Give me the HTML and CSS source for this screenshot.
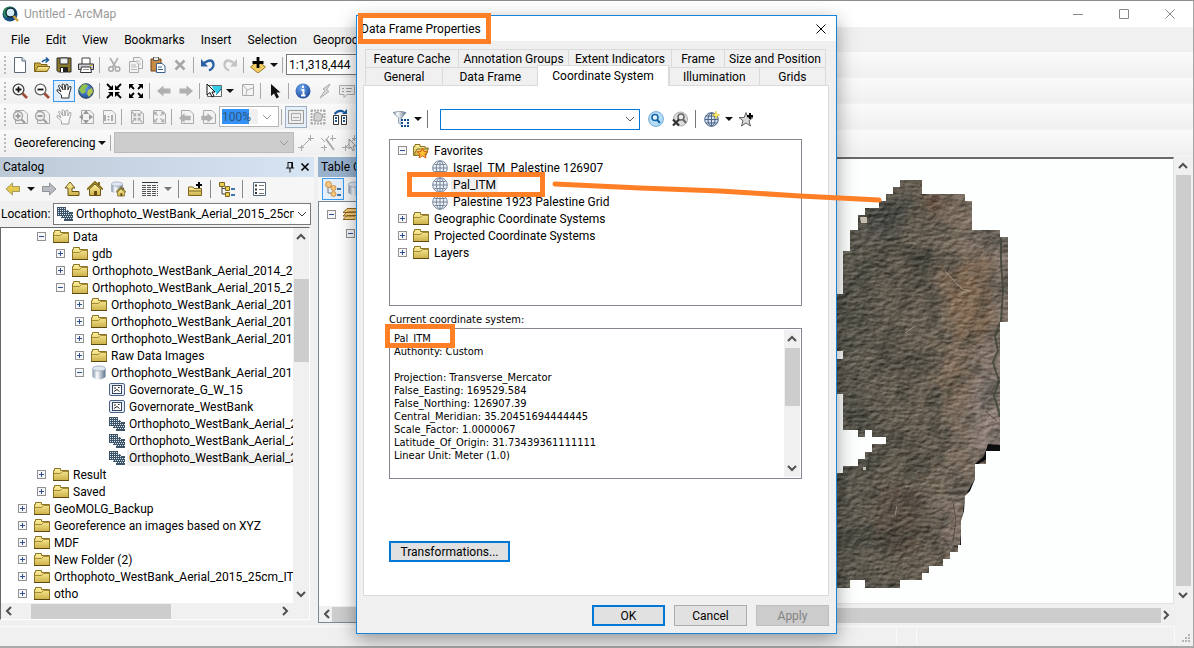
FILE: index.html
```
<!DOCTYPE html>
<html lang="en">
<head>
  <meta charset="UTF-8">
  <meta name="viewport" content="width=device-width, initial-scale=1.0">
  <title>Untitled - ArcMap</title>
  <link rel="stylesheet" href="styles.css">
</head>
<body>
  <!-- icon set -->
  <svg class="sprite" aria-hidden="true">
    <defs>
      <linearGradient id="gold" x1="0" y1="0" x2="0" y2="1"><stop offset="0" stop-color="#fff3a0"/><stop offset="1" stop-color="#cdb04a"/></linearGradient>
      <linearGradient id="steel"><stop offset="0" stop-color="#7f93aa"/><stop offset=".35" stop-color="#fff"/><stop offset="1" stop-color="#5c728c"/></linearGradient>
      <radialGradient id="blue" cx=".4" cy=".3" r=".8"><stop offset="0" stop-color="#6ea8ee"/><stop offset="1" stop-color="#123f92"/></radialGradient>
    </defs>
    <symbol id="folder" viewBox="0 0 16 16"><path d="M.5 13.500V3.500H1.500V1.500H7.500V3.500H15.500V13.500Z" fill="url(#gold)" stroke="#8c7426"/><path d="M1 6.500H7.500L9.500 4.500H15" fill="none" stroke="#a58b36"/><path d="M0 13.500H16" stroke="#5c4a12"/></symbol>
    <symbol id="favs" viewBox="0 0 16 16"><path d="M.5 12.500V3.500H2V1.500H7V3.500H12V5H15.500L13 12.500Z" fill="url(#gold)" stroke="#8c7426"/><path d="M1 12L4 6H15" fill="none" stroke="#8c7426"/><path d="M9.500 5L11 8.500 15 8.800 12 11 13 15 9.500 12.800 6 15 7 11 4 8.800 8 8.500Z" fill="#ffc332" stroke="#d55c10"/></symbol>
    <symbol id="gdb" viewBox="0 0 16 16"><path d="M1.500 3.500V12Q8 17 14.500 12V3.500Z" fill="url(#steel)"/><ellipse cx="8" cy="3.500" rx="6.500" ry="2.500" fill="#dfe7f0" stroke="#a8b5c4"/></symbol>
    <symbol id="feature" viewBox="0 0 16 16"><rect x=".5" y="1.500" width="15" height="12" rx="1.500" fill="#e7eef8" stroke="#4a6286"/><rect x="3.500" y="3.500" width="9" height="8" fill="#fff" stroke="#34445c"/><path d="M5 6H7M9 5.500H10.500M5 9.500L8 7.500 10.500 9.500" stroke="#222" fill="none"/></symbol>
    <symbol id="raster" viewBox="0 0 16 16"><path d="M0 1H9V4H12V6H16V15H7V12H4V10H0Z" fill="#3d5468"/><path d="M1 2.500H9M1 4.500H12M1 6.500H12M1 8.500H16M4 10.500H16M7 12.500H16" stroke="#dce8f2" stroke-dasharray="1 1"/></symbol>
    <symbol id="globe" viewBox="0 0 16 16"><circle cx="8" cy="8" r="7.300" fill="#eef2f6" stroke="#76869b"/><path d="M8 1V15M1 8H15M2.500 4.500H13.500M2.500 11.500H13.500" stroke="#76869b" fill="none"/><ellipse cx="8" cy="8" rx="3.700" ry="7" fill="none" stroke="#76869b"/></symbol>
    <symbol id="globe-new" viewBox="0 0 16 16"><circle cx="7.500" cy="8.500" r="6.800" fill="#d4e0ef" stroke="#4a6488"/><path d="M7.500 2V15M1 8.500H14M2 5H13M2 12H13" stroke="#4a6488" fill="none"/><ellipse cx="7.500" cy="8.500" rx="3.500" ry="6.500" fill="none" stroke="#4a6488"/><path d="M12 0L13 3 16 4 13 5 12 8 11 5 8 4 11 3Z" fill="#fff36b" stroke="#d8b92c" stroke-width=".5"/></symbol>
    <symbol id="star-add" viewBox="0 0 16 16"><path d="M7 1.500L8.800 6.500H14L10 9.800 11.500 15 7 12 2.500 15 4 9.800 0 6.500H5.200Z" fill="#d9d9d9" stroke="#606060"/><path d="M11 2V8M8 5H14" stroke="#000" stroke-width="2"/></symbol>
    <symbol id="filter" viewBox="0 0 16 16"><path d="M0 1.500Q6.500-1 13 1.500L8.500 7V14L5.500 12V7Z" fill="url(#steel)" stroke="#6d7e90" stroke-width=".7"/><path d="M8 8H16V16H8Z" fill="#fff"/><path d="M8 9H16M8 15H16M9 11V14M15 11V14" stroke="#0a4f96" stroke-width="2" stroke-dasharray="2 1"/></symbol>
    <symbol id="find" viewBox="0 0 16 16"><circle cx="8" cy="8" r="7.400" fill="#b6ddf7" stroke="#6faad6"/><circle cx="7" cy="6.500" r="3" fill="#e8f6ff" stroke="#1667a8" stroke-width="1.600"/><path d="M9.200 9L12 12" stroke="#1667a8" stroke-width="2.200"/></symbol>
    <symbol id="find-clear" viewBox="0 0 16 16"><circle cx="8.500" cy="8" r="7" fill="#ddd" stroke="#aaa"/><circle cx="9" cy="6" r="3" fill="#eee" stroke="#666" stroke-width="1.500"/><path d="M11 8.500L14 12" stroke="#666" stroke-width="2"/><path d="M1 8.500L7 14.500M7 8.500L1 14.500" stroke="#333" stroke-width="2.200"/></symbol>
    <symbol id="app" viewBox="0 0 18 18"><circle cx="8" cy="9" r="7.500" fill="#17507f"/><path d="M2 4Q7 0 12 3L9 8 4 13Q0 10 2 4Z" fill="#2e8b57"/><circle cx="8.500" cy="7.500" r="4.500" fill="#d3edf8" stroke="#123" stroke-width="1.300"/><path d="M11.500 11L16 16" stroke="#caa13c" stroke-width="2.500"/></symbol>
    <symbol id="page" viewBox="0 0 16 16"><path d="M2.500.5H10L13.500 4V15.500H2.500Z" fill="#fff" stroke="#5a6a7a"/><path d="M10 .5V4H13.500" fill="#dbe4ee" stroke="#5a6a7a"/></symbol>
    <symbol id="open" viewBox="0 0 16 16"><path d="M.5 14.500V6H6L7 7.500H13V14.500Z" fill="#c9a93f" stroke="#7d651b"/><path d="M1 14.500L4 9.500H16L13 14.500Z" fill="url(#gold)" stroke="#7d651b"/><path d="M8 5Q10 2 14 3M12 .5L14.500 3 11.500 5.500" fill="none" stroke="#17599b" stroke-width="1.500"/></symbol>
    <symbol id="save" viewBox="0 0 16 16"><path d="M1 1H15V15H2.500L1 13.500Z" fill="#8c7a2c" stroke="#2b2b2b"/><path d="M4 1H12V7H4Z" fill="#eee" stroke="#333"/><path d="M4 10H12V15H4Z" fill="#222"/><path d="M6 11V15" stroke="#fff" stroke-width="2"/></symbol>
    <symbol id="print" viewBox="0 0 16 16"><path d="M4 7V1H12V7" fill="#fff" stroke="#444"/><path d="M.5 7H15.500V12.500H.5Z" fill="#c9ccd0" stroke="#333"/><path d="M3.500 10H12.500L13.500 15.500H2.500Z" fill="#fff" stroke="#333"/><path d="M5 12.500H11" stroke="#999"/><path d="M12 8.500H14" stroke="#e0b000"/></symbol>
    <symbol id="cut" viewBox="0 0 16 16"><path d="M4 1L9.500 10M12 1L6.500 10" stroke="#aaa" stroke-width="1.500"/><circle cx="5" cy="12" r="2.300" fill="none" stroke="#aaa" stroke-width="1.500"/><circle cx="11.500" cy="12" r="2.300" fill="none" stroke="#aaa" stroke-width="1.500"/></symbol>
    <symbol id="copy" viewBox="0 0 16 16"><path d="M5.500.5H12L14.500 3V11.500H5.500Z" fill="#f3f3f3" stroke="#aaa"/><path d="M1.500 4.500H8L10.500 7V15.500H1.500Z" fill="#f3f3f3" stroke="#aaa"/><path d="M3 8H8M3 10H9M3 12.500H9M8 4H12M11 7H13" stroke="#bbb"/></symbol>
    <symbol id="paste" viewBox="0 0 16 16"><path d="M1 2H11V14H1Z" fill="#c98a45" stroke="#6e4317"/><path d="M3.500 0H8.500V3.500H3.500Z" fill="#eee" stroke="#555"/><path d="M6.500 6.500H12L15 9V15.500H6.500Z" fill="#fff" stroke="#38618e"/><path d="M8 10H12M8 12.500H13" stroke="#38618e"/></symbol>
    <symbol id="delete" viewBox="0 0 16 16"><path d="M3.500 3.500L12.500 12.500M12.500 3.500L3.500 12.500" stroke="#a7a7a7" stroke-width="2.600"/></symbol>
    <symbol id="undo" viewBox="0 0 16 16"><path d="M3 7Q12 0 13.500 7 14 11 9 13.500" fill="none" stroke="#2b62a5" stroke-width="2.400"/><path d="M1 2V9.500H8Z" fill="#2b62a5"/></symbol>
    <symbol id="redo" viewBox="0 0 16 16"><path d="M13 7Q4 0 2.500 7 2 11 7 13.500" fill="none" stroke="#c4c4c4" stroke-width="2.400"/><path d="M15 2V9.500H8Z" fill="#c4c4c4"/></symbol>
    <symbol id="add-data" viewBox="0 0 16 16"><path d="M8 4L15.500 10 8 16 .5 10Z" fill="#f2cc62" stroke="#9c772a"/><path d="M8 0V11M2.500 5.500H13.500" stroke="#000" stroke-width="2.800"/></symbol>
    <symbol id="zoom-in" viewBox="0 0 16 16"><circle cx="6.500" cy="6.500" r="5.400" fill="#fff" stroke="#444" stroke-width="1.300"/><path d="M10.500 10.500L15 15" stroke="#a04b38" stroke-width="2.600"/><path d="M6.500 3.500V9.500M3.500 6.500H9.500" stroke="#111" stroke-width="1.800"/></symbol>
    <symbol id="zoom-out" viewBox="0 0 16 16"><circle cx="6.500" cy="6.500" r="5.400" fill="#fff" stroke="#666" stroke-width="1.300"/><path d="M10.500 10.500L15 15" stroke="#a04b38" stroke-width="2.600"/><path d="M3.500 6.500H9.500" stroke="#111" stroke-width="1.800"/></symbol>
    <symbol id="hand" viewBox="0 0 16 16"><path d="M5.500 15V12L1 8Q0 6 3 7L5 9 2.500 3Q3 1 4.500 3L7 7 6 1.500Q7.500 0 8.500 2L9 7 10 1.500Q11.500 0 12 2.500L11.800 7 13.500 3.500Q15.500 3 15 5L13 12V15Z" fill="#fff" stroke="#333"/></symbol>
    <symbol id="earth" viewBox="0 0 16 16"><circle cx="8" cy="8" r="7.300" fill="url(#blue)" stroke="#345"/><path d="M4 2Q9 0 10 3L7 6 8 9 4 11 1 7Z" fill="#8fc050"/><path d="M10 7L14 5 15 9 11 14 9 11Z" fill="#b4c64e"/></symbol>
    <symbol id="arrows-in" viewBox="0 0 16 16"><path d="M1 1L6 6M15 1L10 6M1 15L6 10M15 15L10 10" stroke="currentColor" stroke-width="1.800"/><path d="M7 2V7H2ZM9 2V7H14ZM7 14V9H2ZM9 14V9H14Z" fill="currentColor"/></symbol>
    <symbol id="arrows-out" viewBox="0 0 16 16"><path d="M2 2L6 6M14 2L10 6M2 14L6 10M14 14L10 10" stroke="currentColor" stroke-width="1.800"/><path d="M1 1H6L1 6ZM15 1H10L15 6ZM1 15H6L1 10ZM15 15H10L15 10Z" fill="currentColor"/></symbol>
    <symbol id="left" viewBox="0 0 16 16"><path d="M1 8L7.500 2V5.500H14.500V10.500H7.500V14Z" fill="currentColor" stroke="#776a3a" stroke-opacity=".6"/></symbol>
    <symbol id="right" viewBox="0 0 16 16"><path d="M15 8L8.500 2V5.500H1.500V10.500H8.500V14Z" fill="currentColor" stroke="#666" stroke-opacity=".6"/></symbol>
    <symbol id="left-off" viewBox="0 0 16 16"><path d="M1 8L7.500 2.500V5.500H14.500V10.500H7.500V13.500Z" fill="#b0b0b0"/></symbol>
    <symbol id="right-off" viewBox="0 0 16 16"><path d="M15 8L8.500 2.500V5.500H1.500V10.500H8.500V13.500Z" fill="#b0b0b0"/></symbol>
    <symbol id="select-feat" viewBox="0 0 16 16"><path d="M1.500 2.500H15.500V13.500H1.500Z" fill="#fff" stroke="#666"/><path d="M6 3H15V7L11 11 7 6Z" fill="#35cdea"/><path d="M10 12L15 6" stroke="#176d96"/><path d="M1 1V12L4 9.500 6 14 8 13 6 9H9Z" fill="#fff" stroke="#111"/></symbol>
    <symbol id="clear-sel" viewBox="0 0 16 16"><path d="M3.500 1.500H14.500V12.500H3.500Z" fill="#f4f4f4" stroke="#aaa"/><path d="M4 2L8 7 14 5M8 7L7 12" fill="none" stroke="#b5b5b5"/></symbol>
    <symbol id="pointer" viewBox="0 0 16 16"><path d="M4 1V13L7 10.500 9.500 15.500 12 14 9.500 9.500H13.500Z" fill="#111"/></symbol>
    <symbol id="info" viewBox="0 0 16 16"><circle cx="8" cy="8" r="7.500" fill="url(#blue)"/><path d="M8 2.500V5M6.500 7H8.500V12.500M6 12.500H10.500" stroke="#fff" stroke-width="1.900" fill="none"/></symbol>
    <symbol id="bolt" viewBox="0 0 16 16"><path d="M13 1L6 6 8 7.500 3 15 12 8.500 9.500 7Z" fill="#ddd" stroke="#aaa"/></symbol>
    <symbol id="popup" viewBox="0 0 16 16"><path d="M.5 2.500H15.500V11.500H8L5 14.500V11.500H.5Z" fill="#eee" stroke="#aaa"/><path d="M3 5.500H5M7 5.500H13M3 8.500H5M7 8.500H12" stroke="#999"/></symbol>
    <symbol id="sheet" viewBox="0 0 16 16"><path d="M3.500 1.500H12L15.500 5V14.500H3.500Z" fill="#f2f2f2" stroke="#aaa"/></symbol>
    <symbol id="lens" viewBox="0 0 16 16"><circle cx="6" cy="7" r="4.500" fill="#eee" stroke="#a2a2a2" stroke-width="1.300"/><path d="M9.500 10.500L13 14M3.500 7H8.500" stroke="#9c9c9c" stroke-width="2"/></symbol>
    <symbol id="layout" viewBox="0 0 16 16"><path d="M.5 1.500H15.500V14.500H.5Z" fill="#eee" stroke="#999"/><path d="M3.500 4.500H12.500V11.500H3.500ZM5 8.500H11" fill="none" stroke="#aaa"/></symbol>
    <symbol id="swap" viewBox="0 0 16 16"><path d="M1.500 6.500H6.500V15.500H1.500ZM9.500 6.500H14.500V15.500H9.500Z" fill="#fff" stroke="#333"/><path d="M2.500 5Q7 0 12 3M3 9H5M3 12H5M11 9H13M11 12H13" fill="none" stroke="#17599b" stroke-width="2"/><path d="M10 5H15V0Z" fill="#17599b"/></symbol>
    <symbol id="link" viewBox="0 0 16 16"><path d="M3 13L13 3M0 12.500H6M3.500 10V16M10 3.500H16M12.500 0V6" stroke="#aaa"/></symbol>
    <symbol id="wand" viewBox="0 0 16 16"><path d="M6 4L14 15" stroke="#aaa" stroke-width="2"/><path d="M1 3L5 7M9 1L7 4M1 12.500H7M4.500 10V16M10 3.500H16M12.500 0V6" stroke="#aaa"/></symbol>
    <symbol id="up-level" viewBox="0 0 16 16"><path d="M6 1L11 7H8V10.500H15V14.500H4V7H1Z" fill="url(#gold)" stroke="#6b5712"/></symbol>
    <symbol id="home" viewBox="0 0 16 16"><path d="M2.500 8V14.500H13.500V8L8 3Z" fill="url(#gold)" stroke="#6b5712"/><path d="M0 8.500L8 1 16 8.500" fill="none" stroke="#8b7015" stroke-width="2"/><path d="M7 10H10V14.500H7Z" fill="#6b4b12"/><path d="M12 1V4" stroke="#7c632a" stroke-width="2"/></symbol>
    <symbol id="grid" viewBox="0 0 16 16"><path d="M0 1.500H16" stroke="#333"/><path d="M0 4.500H16M0 6.500H16M0 8.500H16M0 10.500H16M0 12.500H16M0 14.500H16" stroke="#555" stroke-dasharray="4 1"/></symbol>
    <symbol id="connect" viewBox="0 0 16 16"><path d="M1.500 14.500V6H6L7 7.500H14.500V14.500Z" fill="url(#gold)" stroke="#7d651b"/><path d="M1 10H15" stroke="#7d651b"/><path d="M12 1V7M9 4H15" stroke="#000" stroke-width="2"/></symbol>
    <symbol id="tree" viewBox="0 0 16 16"><path d="M3 5V13H7M3 7.500H7" fill="none" stroke="#444"/><path d="M.5 1.500H5.500V5.500H.5ZM6.500 5.500H10.500V9.500H6.500ZM6.500 11.500H10.500V15.500H6.500Z" fill="#e9ce56" stroke="#7d651b"/><path d="M12 8H16M12 14H16" stroke="#3f77ac" stroke-width="2"/></symbol>
    <symbol id="options" viewBox="0 0 16 16"><path d="M2.500 1.500H14.500V14.500H2.500Z" fill="#fff" stroke="#56697f"/><path d="M4 4.500H6M4 8.500H6M4 12H6" stroke="#333" stroke-width="2"/><path d="M8 4.500H13M8 8.500H13M8 12.500H13" stroke="#777"/></symbol>
    <symbol id="toc-tree" viewBox="0 0 16 16"><path d="M3 4V12H8M4 6H8" fill="none" stroke="#777"/><circle cx="3.500" cy="3.500" r="3" fill="#f4c883" stroke="#d19446"/><circle cx="8.500" cy="7" r="2.500" fill="#f4c883" stroke="#d19446"/><circle cx="8.500" cy="13" r="2.500" fill="#f4c883" stroke="#d19446"/><path d="M12 8H16M12 14H16" stroke="#3f77ac" stroke-width="2"/></symbol>
    <symbol id="layers" viewBox="0 0 16 16"><path d="M0 12.500L4 8.500H16L12 12.500ZM0 9L4 5H16L12 9ZM0 5.500L4 1.500H16L12 5.500Z" fill="#f0cd7e" stroke="#94641d"/></symbol>
    <symbol id="pin" viewBox="0 0 12 12"><path d="M4 1.500H8.500V7M4 1V7M2 7H10M6 7V11.500" fill="none" stroke="#111"/><path d="M8 1V7" stroke="#111" stroke-width="1.600"/></symbol>
    <symbol id="cross" viewBox="0 0 12 12"><path d="M1.500 1.500L10.500 10.500M10.500 1.500L1.500 10.500" stroke="currentColor" fill="none"/></symbol>
    <symbol id="cross-sm" viewBox="0 0 12 12"><path d="M2.500 2.500L9.500 9.500M9.500 2.500L2.500 9.500" stroke="#000" stroke-width="1.600"/></symbol>
    <symbol id="chev" viewBox="0 0 10 10"><path d="M1 3L5 7 9 3" fill="none" stroke="currentColor"/></symbol>
    <symbol id="sb" viewBox="0 0 10 10"><path d="M1 7L5 3 9 7" fill="none" stroke="#505050" stroke-width="2"/></symbol>
  </svg>

  <div class="app">
    <header class="titlebar">
      <svg class="app-icon"><use href="#app"/></svg>
      <span class="app-title">Untitled - ArcMap</span>
      <div class="win-controls">
        <button aria-label="Minimize"><svg viewBox="0 0 12 12"><path d="M1 6.500H11" stroke="#888"/></svg></button>
        <button aria-label="Maximize"><svg viewBox="0 0 12 12"><path d="M1.500 1.500H10.500V10.500H1.500Z" fill="none" stroke="#888"/></svg></button>
        <button aria-label="Close"><svg><use href="#cross"/></svg></button>
      </div>
    </header>

    <nav class="menubar">
      <button>File</button><button>Edit</button><button>View</button><button>Bookmarks</button><button>Insert</button><button>Selection</button><button>Geoprocessing</button>
    </nav>

    <div class="toolbars">
      <div class="toolbar">
        <i class="grip"></i>
        <button aria-label="New"><svg><use href="#page"/></svg></button>
        <button aria-label="Open"><svg><use href="#open"/></svg></button>
        <button aria-label="Save"><svg><use href="#save"/></svg></button>
        <button aria-label="Print"><svg><use href="#print"/></svg></button>
        <i class="sep"></i>
        <button aria-label="Cut"><svg><use href="#cut"/></svg></button>
        <button aria-label="Copy"><svg><use href="#copy"/></svg></button>
        <button aria-label="Paste"><svg><use href="#paste"/></svg></button>
        <button aria-label="Delete"><svg><use href="#delete"/></svg></button>
        <i class="sep"></i>
        <button aria-label="Undo"><svg><use href="#undo"/></svg></button>
        <button aria-label="Redo"><svg><use href="#redo"/></svg></button>
        <i class="sep"></i>
        <button aria-label="Add data"><svg><use href="#add-data"/></svg></button>
        <i class="arrow"></i>
        <i class="sep"></i>
        <select class="scale" aria-label="Map scale"><option>1:1,318,444</option></select>
      </div>
      <div class="toolbar">
        <i class="grip"></i>
        <button aria-label="Zoom in"><svg><use href="#zoom-in"/></svg></button>
        <button aria-label="Zoom out"><svg><use href="#zoom-out"/></svg></button>
        <button class="active" aria-label="Pan"><svg><use href="#hand"/></svg></button>
        <button aria-label="Full extent"><svg><use href="#earth"/></svg></button>
        <i class="sep"></i>
        <button aria-label="Fixed zoom in"><svg><use href="#arrows-in"/></svg></button>
        <button aria-label="Fixed zoom out"><svg><use href="#arrows-out"/></svg></button>
        <i class="sep"></i>
        <button aria-label="Back"><svg><use href="#left-off"/></svg></button>
        <button aria-label="Forward"><svg><use href="#right-off"/></svg></button>
        <i class="sep"></i>
        <button aria-label="Select features"><svg><use href="#select-feat"/></svg></button>
        <i class="arrow"></i>
        <button aria-label="Clear selection"><svg><use href="#clear-sel"/></svg></button>
        <i class="sep"></i>
        <button aria-label="Select elements"><svg><use href="#pointer"/></svg></button>
        <i class="sep"></i>
        <button aria-label="Identify"><svg><use href="#info"/></svg></button>
        <button aria-label="Hyperlink"><svg><use href="#bolt"/></svg></button>
        <button aria-label="HTML popup"><svg><use href="#popup"/></svg></button>
      </div>
      <div class="toolbar">
        <i class="grip"></i>
        <button class="dim" aria-label="Layout zoom in"><svg viewBox="0 0 16 16"><use href="#sheet"/><use href="#lens"/><path d="M6 4.500V9.500" stroke="#9c9c9c" stroke-width="2"/></svg></button>
        <button class="dim" aria-label="Layout zoom out"><svg viewBox="0 0 16 16"><use href="#sheet"/><use href="#lens"/></svg></button>
        <button class="dim faded" aria-label="Layout pan"><svg><use href="#hand"/></svg></button>
        <button class="dim" aria-label="Whole page"><svg viewBox="0 0 16 16"><use href="#sheet"/><path d="M8 1L11 5H5ZM8 15L11 11H5ZM1 8L5 5V11ZM15 8L11 5V11Z" fill="#999"/></svg></button>
        <button class="dim" aria-label="Actual size"><svg viewBox="0 0 16 16"><use href="#sheet"/><path d="M5 6V12M12 6V12M8.500 7V8.500M8.500 10V11.500" stroke="#999" stroke-width="1.600"/></svg></button>
        <i class="sep"></i>
        <button class="dim" aria-label="Layout fixed zoom in"><svg viewBox="0 0 16 16"><use href="#sheet"/><use href="#arrows-in" x="3" y="2" width="12" height="12"/></svg></button>
        <button class="dim" aria-label="Layout fixed zoom out"><svg viewBox="0 0 16 16"><use href="#sheet"/><use href="#arrows-out" x="3" y="2" width="12" height="12"/></svg></button>
        <i class="sep"></i>
        <button class="dim" aria-label="Previous extent"><svg viewBox="0 0 16 16"><use href="#sheet"/><use href="#left-off" width="14" y="1"/></svg></button>
        <button class="dim" aria-label="Next extent"><svg viewBox="0 0 16 16"><use href="#sheet"/><use href="#right-off" width="14" y="1"/></svg></button>
        <div class="combo percent"><input aria-label="Layout zoom" value="100%" disabled><svg><use href="#chev"/></svg></div>
        <i class="sep"></i>
        <button class="pressed" aria-label="Draft mode"><svg><use href="#layout"/></svg></button>
        <button class="dim" aria-label="Focus data frame"><svg viewBox="0 0 16 16"><path d="M1 1.500H15M1 14.500H15M1.500 1V15M14.500 1V15" stroke="#aaa" stroke-width="2" stroke-dasharray="2 1"/><path d="M4 5L7 3 13 6 11 12 4 12Z" fill="#d0d0d0" stroke="#999"/></svg></button>
        <button aria-label="Change layout"><svg><use href="#swap"/></svg></button>
      </div>
      <div class="toolbar">
        <i class="grip"></i>
        <button class="text-btn">Georeferencing<i class="arrow"></i></button>
        <i class="sep"></i>
        <div class="combo georef-layer"><select aria-label="Georeferencing layer" disabled><option></option></select><svg><use href="#chev"/></svg></div>
        <button aria-label="Add control points"><svg><use href="#link"/></svg></button>
        <button aria-label="Auto registration"><svg><use href="#wand"/></svg></button>
        <button aria-label="Select link"><svg viewBox="0 0 16 16"><use href="#link"/><path d="M7 4V14L9 12 11 16 12.500 15 11 11H14Z" fill="#eee" stroke="#999"/></svg></button>
      </div>
    </div>

    <main class="workspace">
      <section class="catalog">
        <h2 class="pane-head">Catalog
          <span class="pane-tools"><button aria-label="Pin"><svg><use href="#pin"/></svg></button><button aria-label="Close catalog"><svg><use href="#cross-sm"/></svg></button></span>
        </h2>
        <div class="toolbar pane-bar">
          <button class="gold" aria-label="Back"><svg><use href="#left"/></svg></button>
          <i class="arrow"></i>
          <button class="grey" aria-label="Forward"><svg><use href="#right"/></svg></button>
          <button aria-label="Up one level"><svg><use href="#up-level"/></svg></button>
          <button aria-label="Home"><svg><use href="#home"/></svg></button>
          <button aria-label="Default geodatabase"><svg viewBox="0 0 16 16"><use href="#gdb" width="14" height="14"/><use href="#home" x="6" y="6" width="10" height="10"/></svg></button>
          <i class="sep"></i>
          <button aria-label="Contents view"><svg><use href="#grid"/></svg></button>
          <i class="arrow soft"></i>
          <i class="sep"></i>
          <button aria-label="Connect to folder"><svg><use href="#connect"/></svg></button>
          <i class="sep"></i>
          <button aria-label="Tree view"><svg><use href="#tree"/></svg></button>
          <i class="sep"></i>
          <button aria-label="Options"><svg><use href="#options"/></svg></button>
        </div>
        <div class="location">
          <label for="location">Location:</label>
          <div class="location-box">
            <svg><use href="#raster"/></svg>
            <select id="location"><option>Orthophoto_WestBank_Aerial_2015_25cm_ITM</option></select>
            <svg class="chev"><use href="#chev"/></svg>
          </div>
        </div>
        <div class="scroller catalog-scroller">
          <ul class="tree">
            <li class="l1"><button class="tog minus" aria-label="Collapse"></button><svg><use href="#folder"/></svg><span>Data</span></li>
            <li class="l2"><button class="tog" aria-label="Expand"></button><svg><use href="#folder"/></svg><span>gdb</span></li>
            <li class="l2"><button class="tog" aria-label="Expand"></button><svg><use href="#folder"/></svg><span>Orthophoto_WestBank_Aerial_2014_25cm</span></li>
            <li class="l2"><button class="tog minus" aria-label="Collapse"></button><svg><use href="#folder"/></svg><span>Orthophoto_WestBank_Aerial_2015_25cm</span></li>
            <li class="l3"><button class="tog" aria-label="Expand"></button><svg><use href="#folder"/></svg><span>Orthophoto_WestBank_Aerial_2015_25</span></li>
            <li class="l3"><button class="tog" aria-label="Expand"></button><svg><use href="#folder"/></svg><span>Orthophoto_WestBank_Aerial_2015_25</span></li>
            <li class="l3"><button class="tog" aria-label="Expand"></button><svg><use href="#folder"/></svg><span>Orthophoto_WestBank_Aerial_2015_25</span></li>
            <li class="l3"><button class="tog" aria-label="Expand"></button><svg><use href="#folder"/></svg><span>Raw Data Images</span></li>
            <li class="l3"><button class="tog minus" aria-label="Collapse"></button><svg><use href="#gdb"/></svg><span>Orthophoto_WestBank_Aerial_2015_25</span></li>
            <li class="l4"><svg><use href="#feature"/></svg><span>Governorate_G_W_15</span></li>
            <li class="l4"><svg><use href="#feature"/></svg><span>Governorate_WestBank</span></li>
            <li class="l4"><svg><use href="#raster"/></svg><span>Orthophoto_WestBank_Aerial_2015</span></li>
            <li class="l4"><svg><use href="#raster"/></svg><span>Orthophoto_WestBank_Aerial_2015</span></li>
            <li class="l4"><svg><use href="#raster"/></svg><span class="picked">Orthophoto_WestBank_Aerial_2015</span></li>
            <li class="l1"><button class="tog" aria-label="Expand"></button><svg><use href="#folder"/></svg><span>Result</span></li>
            <li class="l1"><button class="tog" aria-label="Expand"></button><svg><use href="#folder"/></svg><span>Saved</span></li>
            <li class="l0"><button class="tog" aria-label="Expand"></button><svg><use href="#folder"/></svg><span>GeoMOLG_Backup</span></li>
            <li class="l0"><button class="tog" aria-label="Expand"></button><svg><use href="#folder"/></svg><span>Georeference an images based on XYZ</span></li>
            <li class="l0"><button class="tog" aria-label="Expand"></button><svg><use href="#folder"/></svg><span>MDF</span></li>
            <li class="l0"><button class="tog" aria-label="Expand"></button><svg><use href="#folder"/></svg><span>New Folder (2)</span></li>
            <li class="l0"><button class="tog" aria-label="Expand"></button><svg><use href="#folder"/></svg><span>Orthophoto_WestBank_Aerial_2015_25cm_ITM</span></li>
            <li class="l0"><button class="tog" aria-label="Expand"></button><svg><use href="#folder"/></svg><span>otho</span></li>
          </ul>
          <div class="vbar"><svg><use href="#sb"/></svg><div class="track catalog-v"><i></i></div><svg class="down"><use href="#sb"/></svg></div>
          <div class="hbar"><svg class="lt"><use href="#sb"/></svg><div class="track catalog-h"><i></i></div><svg class="rt"><use href="#sb"/></svg></div>
        </div>
      </section>

      <section class="toc">
        <h2 class="pane-head">Table Of Contents</h2>
        <div class="toolbar pane-bar">
          <button class="active" aria-label="List by drawing order"><svg><use href="#toc-tree"/></svg></button>
          <button aria-label="List by source"><svg><use href="#gdb"/></svg></button>
        </div>
        <div class="toc-box">
          <ul class="tree">
            <li><button class="tog minus" aria-label="Collapse"></button><svg><use href="#layers"/></svg><span>Layers</span></li>
            <li class="l1"><button class="tog minus" aria-label="Collapse"></button></li>
          </ul>
          <div class="hbar"><svg class="lt"><use href="#sb"/></svg><div class="track"><i></i></div></div>
        </div>
      </section>

      <section class="map">
        <div class="map-canvas">
          <svg class="ortho" viewBox="818 158 190 448" role="img" aria-label="Orthophoto mosaic">
            <defs>
              <clipPath id="mosaic"><path d="M900 179H922V193H965V200H972V229H1000V236H1008V321H1000V450H986V463H975V478L970 490 965 495 964 510 961 520V544H958V551H950V558H943V565H929V572H922V579H900V587H865V579H850V587H818V472H843V465H858V458H865V451H872V443H886V436H872V429H865V436H858V429H843V393H818V358H843V350H818V293H843V250H850V229H858V214H865V207H879V200H886V193H893V186H900Z"/></clipPath>
              <linearGradient id="land"><stop offset="0" stop-color="#5d5b52"/><stop offset=".5" stop-color="#665e51"/><stop offset=".75" stop-color="#7d6f61"/><stop offset="1" stop-color="#85786f"/></linearGradient>
              <filter id="relief" x="0" y="0" width="1" height="1" color-interpolation-filters="sRGB"><feTurbulence type="fractalNoise" baseFrequency=".14 .26" numOctaves="5" seed="4"/><feDiffuseLighting surfaceScale="1" lighting-color="#fff"><feDistantLight azimuth="235" elevation="30"/></feDiffuseLighting></filter>
              <filter id="tint" x="0" y="0" width="1" height="1"><feTurbulence type="fractalNoise" baseFrequency=".04" numOctaves="6" seed="9"/><feColorMatrix values="0 0 0 0 .03  0 0 0 0 .035  0 0 0 0 .03  4 0 0 0 -1.700"/></filter>
              <filter id="soft"><feGaussianBlur stdDeviation="6"/></filter>
            </defs>
            <g clip-path="url(#mosaic)">
              <path d="M818 158H1008V606H818Z" fill="url(#land)"/>
              <g filter="url(#soft)">
                <path d="M940 270L990 250 995 330 960 350 945 300Z" fill="#826c57"/>
                <path d="M945 340L970 370 960 400 940 390Z" fill="#87725e"/>
                <path d="M900 250L935 245 940 270 915 280Z" fill="#4b4840"/>
                <path d="M870 205L915 190 900 235 860 240Z" fill="#55534e"/>
                <path d="M925 195L945 195 930 215Z" fill="#5c4234"/>
                <path d="M975 380L1000 370V450H975Z" fill="#8f8179"/>
                <path d="M945 490L965 480 955 550 935 540Z" fill="#85766c"/>
                <path d="M880 480L925 490 915 560 870 540Z" fill="#5e5347"/>
              </g>
              <path d="M818 158H1008V606H818Z" filter="url(#tint)" opacity=".4"/>
              <path class="relief" d="M818 158H1008V606H818Z" filter="url(#relief)"/>
              <path d="M1001 237L1001 260 1003 290 1001 320 995 335 998 350 993 361 999 380 994 395 999 410M996 400L1000 416" fill="none" stroke="#3d4435" stroke-width="2" stroke-opacity=".8"/>
              <path d="M945 270L962 288 970 290M905 332L915 325M905 485H913M897 505L895 514M905 242H916" fill="none" stroke="#b1a497" stroke-opacity=".7"/>
              <path d="M953 500L956 520 953 540M943 537L950 548M985 410L997 420" fill="none" stroke="#433b32" stroke-opacity=".7"/>
              <path d="M1000 444L988 443 984 455 975 463V478L968 490 964 502 962 520 960 544H963L972 500 978 463 1000 451Z" fill="#0d0d10"/>
              <path d="M860 216H867V222H861ZM863 466H866V469H863Z" fill="#c7beaf"/>
            </g>
          </svg>
        </div>
        <div class="vbar"><svg><use href="#sb"/></svg><div class="track"><i></i></div><svg class="down"><use href="#sb"/></svg></div>
        <div class="hbar"><svg class="lt"><use href="#sb"/></svg><div class="track"><i></i></div><svg class="rt"><use href="#sb"/></svg></div>
      </section>
    </main>

    <footer class="statusbar">
      <span class="pane-a"></span><span class="pane-b"></span><span class="pane-c"></span>
      <svg viewBox="0 0 9 9"><path d="M6 0H8V2H6ZM3 3H5V5H3ZM6 3H8V5H6ZM0 6H2V8H0ZM3 6H5V8H3ZM6 6H8V8H6Z" fill="#b5b5b5"/></svg>
    </footer>
  </div>

  <!-- Data Frame Properties window -->
  <div class="dialog" role="dialog" aria-labelledby="dlg-title">
    <div class="dlg-title">
      <span id="dlg-title">Data Frame Properties</span>
      <button aria-label="Close dialog"><svg><use href="#cross"/></svg></button>
    </div>
    <div class="dlg-body">
      <div class="tabs" role="tablist">
        <div class="tab-row row-a">
          <button role="tab">Feature Cache</button><button role="tab">Annotation Groups</button><button role="tab">Extent Indicators</button><button role="tab">Frame</button><button role="tab">Size and Position</button>
        </div>
        <div class="tab-row row-b">
          <button role="tab">General</button><button role="tab">Data Frame</button><button role="tab" class="selected" aria-selected="true">Coordinate System</button><button role="tab">Illumination</button><button role="tab">Grids</button>
        </div>
      </div>
      <div class="tab-page" role="tabpanel">
        <div class="cs-tools">
          <button aria-label="Spatial filter"><svg><use href="#filter"/></svg></button><i class="arrow"></i>
          <i class="sep"></i>
          <div class="combo search"><input type="text" aria-label="Search coordinate systems"><svg><use href="#chev"/></svg></div>
          <button aria-label="Search"><svg><use href="#find"/></svg></button>
          <button aria-label="Clear search"><svg><use href="#find-clear"/></svg></button>
          <i class="sep"></i>
          <button aria-label="New coordinate system"><svg><use href="#globe-new"/></svg></button><i class="arrow"></i>
          <button aria-label="Add to favorites"><svg><use href="#star-add"/></svg></button>
        </div>
        <ul class="tree cs-tree">
          <li><button class="tog minus" aria-label="Collapse"></button><svg><use href="#favs"/></svg><span>Favorites</span></li>
          <li class="leaf"><svg><use href="#globe"/></svg><span>Israel_TM_Palestine 126907</span></li>
          <li class="leaf"><svg><use href="#globe"/></svg><span class="picked">Pal_ITM</span></li>
          <li class="leaf"><svg><use href="#globe"/></svg><span>Palestine 1923 Palestine Grid</span></li>
          <li><button class="tog" aria-label="Expand"></button><svg><use href="#folder"/></svg><span>Geographic Coordinate Systems</span></li>
          <li><button class="tog" aria-label="Expand"></button><svg><use href="#folder"/></svg><span>Projected Coordinate Systems</span></li>
          <li><button class="tog" aria-label="Expand"></button><svg><use href="#folder"/></svg><span>Layers</span></li>
        </ul>
        <label class="cs-label" for="current-cs">Current coordinate system:</label>
        <div class="cs-details">
          <textarea id="current-cs" readonly>Pal_ITM
Authority: Custom

Projection: Transverse_Mercator
False_Easting: 169529.584
False_Northing: 126907.39
Central_Meridian: 35.20451694444445
Scale_Factor: 1.0000067
Latitude_Of_Origin: 31.73439361111111
Linear Unit: Meter (1.0)</textarea>
          <div class="vbar"><svg><use href="#sb"/></svg><div class="track cs-v"><i></i></div><svg class="down"><use href="#sb"/></svg></div>
        </div>
        <button class="btn primary transform-btn">Transformations...</button>
      </div>
      <div class="dlg-actions">
        <button class="btn primary">OK</button>
        <button class="btn">Cancel</button>
        <button class="btn" disabled>Apply</button>
      </div>
    </div>
  </div>

  <!-- markup drawn over the windows -->
  <svg class="markup" viewBox="0 0 900 400" aria-hidden="true">
    <g fill="none" stroke="#ff7f27" stroke-width="5">
      <rect x="360.500" y="15.500" width="128" height="26"/>
      <rect x="409.500" y="174.500" width="133" height="20"/>
      <rect x="387.500" y="326.500" width="65" height="19"/>
      <path d="M555 184L640 188 720 191 800 196 879 200" stroke-linecap="round"/>
    </g>
  </svg>
</body>
</html>
```
FILE: styles.css
```
*{box-sizing:border-box;margin:0;padding:0}
body{position:relative;height:100vh;overflow:hidden;background:#f0f0f0;color:#000;font:12px/16px Roboto,"Noto Sans",sans-serif}
button,input,select,textarea{font:inherit;color:inherit;border:none;background:none;border-radius:0}
select{appearance:none}
ul{list-style:none}
svg{display:block;flex:none}
.sprite{position:absolute;width:0;height:0}

/* main window */
.app{display:flex;flex-direction:column;height:100vh;border-top:1px solid #8f8c8f;border-right:1px solid #a6a6a6;border-bottom:2px solid #a9a9a9}
.titlebar{display:flex;align-items:center;height:26px;background:#fff;color:#999;padding-left:2px}
.app-icon{width:18px;height:18px;margin-right:4px}
.win-controls{display:flex;margin-left:auto}
.win-controls button{width:46px;height:26px;display:grid;place-items:center}
.win-controls svg{width:12px;height:12px;color:#888}
.menubar{display:flex;height:25px;align-items:center;padding-left:3px}
.menubar button{padding:0 8px}
.toolbars{display:flex;flex-direction:column;gap:1px;background:#f3f3f3;height:105px}
.toolbar{display:flex;align-items:center;height:25px;background:linear-gradient(#fafafa,#f0f0f0)}
.toolbar button{flex:none;width:22px;height:22px;display:grid;place-items:center}
.toolbar svg{width:16px;height:16px}
.toolbar .active{background:#e3effa;border:1px solid #3b99f0}
.toolbar .pressed{background:#e6eef8;border:1px solid #9fb1c6}
.dim{color:#b0b0b0}
.faded{opacity:.4}
.gold{color:#e5c94a}
.grey{color:#b7bcc2}
.grip{flex:none;width:2px;height:18px;margin:0 3px 0 4px;background:repeating-linear-gradient(#bbb 0 2px,transparent 2px 4px)}
.sep{flex:none;width:1px;height:16px;margin:0 3px 0 2px;background:#a8a8a8}
.arrow{flex:none;width:0;height:0;margin:0 2px 0 1px;border:4px solid transparent;border-top-color:#111;border-bottom-width:0}
.arrow.soft{border-top-color:#777}
.scale{width:90px;height:21px;background:#fff;border:1px solid #7a7a7a;padding-left:2px}
.combo{display:flex;align-items:center;background:#fff}
.combo input,.combo select{flex:1;min-width:0;height:100%;outline:none}
.combo svg{width:10px;height:10px;margin:0 4px;color:#555}
.percent{width:60px;height:21px;border:1px solid #b5b5b5;padding:2px}
.percent input{background:linear-gradient(90deg,#3390f5 27px,#f0f0f0 27px);color:#30577c}
.percent svg{width:10px;height:10px;color:#999}
.toolbar .text-btn{display:flex;align-items:center;gap:1px;width:auto;padding-left:5px}
.georef-layer{width:180px;height:21px;margin-right:1px;background:#ccc;border:1px solid #bbb}
.georef-layer svg{width:10px;height:10px;color:#999}

.workspace{flex:1;min-height:0;display:flex;gap:4px}
.catalog{flex:none;width:314px;display:flex;flex-direction:column}
.pane-head{display:flex;align-items:center;height:20px;padding:0 3px;font-size:12px;font-weight:normal;background:linear-gradient(90deg,#bccad8,#d6e4f3)}
.pane-tools{display:flex;gap:3px;margin-left:auto}
.pane-tools svg{width:12px;height:12px}
.pane-bar{height:24px;padding-left:2px;background:#f6f6f6}
.pane-bar .sep{height:18px;margin:0 4px 0 3px;background:#888}
.pane-bar .arrow{margin:0 2px}
.catalog .pane-bar{gap:1px}
.location{display:flex;align-items:center;height:26px;padding:0 3px 0 1px;background:#f0f0f0}
.location label{width:52px}
.location-box{flex:1;min-width:0;display:flex;align-items:center;height:22px;padding:0 3px;background:#fff;border:1px solid #7a7a7a}
.location-box svg{width:16px;height:16px}
.location-box select{flex:1;min-width:0;padding-left:3px}
.location-box .chev{width:10px;height:10px;margin:0 0 0 3px;color:#444}
.scroller{flex:1;min-height:0;display:grid;grid-template:minmax(0,1fr) 16px / minmax(0,1fr) 16px}
.catalog-scroller{margin:0 4px 4px 0;background:#f0f0f0;border:1px solid #fff;border-top-color:#696969;border-left-color:#696969}
.tree{background:#fff;overflow:hidden}
.tree li{display:flex;align-items:center;height:17px;padding-left:17px;white-space:nowrap}
.tree svg{width:16px;height:16px}
.tree .l1{padding-left:36px}
.tree .l2{padding-left:55px}
.tree .l3{padding-left:74px}
.tree .l4{padding-left:108px}
.tree span{padding:0 2px;margin-left:2px}
.picked{background:#f0f0f0}
.tog{flex:none;width:9px;height:9px;margin-right:7px;border:1px solid #919191;background:linear-gradient(#2f4f94,#2f4f94) center/5px 1px no-repeat,linear-gradient(#2f4f94,#2f4f94) center/1px 5px no-repeat,#f7f7f7}
.tog.minus{background:linear-gradient(#2f4f94,#2f4f94) center/5px 1px no-repeat,#f7f7f7}

.vbar,.hbar{display:flex;align-items:center;background:#f0f0f0}
.vbar{flex-direction:column;width:16px}
.hbar{height:16px}
.vbar svg,.hbar svg{width:10px;height:10px;margin:4px 3px}
.down{transform:rotate(180deg)}
.lt{transform:rotate(-90deg)}
.rt{transform:rotate(90deg)}
.track{flex:1;min-height:0;display:flex}
.track i{flex:1;background:#cdcdcd}
.vbar .track{width:15px;flex-direction:column}
.hbar .track{height:15px;margin:0 -3px}
.catalog-v{padding:33px 0 223px}
.catalog-h{padding:0 109px 0 17px}
.catalog-scroller .hbar{grid-column:1}

.toc{flex:none;width:200px;display:flex;flex-direction:column}
.toc .pane-head{background:#98b2ce}
.toc .pane-bar{padding-left:4px}
.toc-box{flex:1;display:flex;flex-direction:column;border:1px solid #7b8794;margin-bottom:1px}
.toc-box .tree{flex:1;padding-top:3px}
.toc-box li{height:19px;padding-left:8px}
.toc-box .l1{padding-left:27px}
.map{flex:1;min-width:0;display:grid;grid-template:minmax(0,1fr) 16px / minmax(0,1fr) 16px;gap:3px 1px;padding:0 2px 1px 0}
.map-canvas{display:flex;justify-content:flex-end;padding-right:165px;overflow:hidden;background:#fdfefe;border-top:2px solid #696969;border-right:1px solid #e3e3e3;border-bottom:1px solid #e3e3e3}
.ortho{width:190px;height:448px}
.relief{mix-blend-mode:soft-light}

.statusbar{display:flex;align-items:center;height:22px;padding-right:2px;background:#f0f0f0}
.statusbar span{height:19px;border-right:1px solid #fafafa;border-top:1px solid #fafafa}
.pane-a{flex:1}
.pane-b{width:20px}
.pane-c{width:258px}
.statusbar svg{width:9px;height:9px;margin:6px 0 0 7px}

/* dialog */
.dialog{position:absolute;left:356px;top:15px;width:481px;height:619px;display:flex;flex-direction:column;background:#f0f0f0;border:1px solid #1883d7;box-shadow:0 6px 18px rgba(0,0,0,.38)}
.dlg-title{display:flex;align-items:center;justify-content:space-between;height:25px;padding:0 9px 0 4px;background:#fff}
.dlg-title svg{width:12px;height:12px}
.dlg-body{flex:1;min-height:0;display:flex;flex-direction:column;padding:8px 7px 7px 6px}
.tabs{padding:0 3px 0 2px}
.tab-row{display:grid;height:18px}
.row-a{grid-template-columns:93fr 110fr 103fr 53fr 102fr}
.row-b{grid-template-columns:77fr 95fr 131fr 90fr 67fr}
.tab-row button{white-space:nowrap;border:1px solid #dadada;border-width:1px 0 0 1px}
.tab-row button:last-child{border-right-width:1px}
.tab-row .selected{height:21px;margin-top:-2px;background:#fff;border-right-width:1px;z-index:1}
.tab-page{flex:1;min-height:0;display:flex;flex-direction:column;align-items:flex-start;padding:22px 26px 0 25px;background:#fff;border:1px solid #dadada}
.cs-tools{display:flex;align-items:center;width:100%;height:22px}
.cs-tools button{width:24px;height:22px;display:grid;place-items:center}
.cs-tools svg{width:16px;height:16px}
.cs-tools .sep{height:18px;margin:0 4px 0 3px;background:#777}
.search{width:200px;height:21px;margin:0 4px 0 8px;border:1px solid #0078d7}
.combo.search svg{width:10px;height:10px}
.cs-tree{width:100%;height:167px;margin-top:9px;padding-top:2px;border:1px solid #828790}
.cs-tree li{padding-left:8px}
.cs-tree .tog{margin-right:6px}
.cs-tree .leaf{padding-left:42px}
.cs-tree span{margin-left:3px}
.cs-label{margin:6px 0 1px;font:11px/15px "DejaVu Sans Condensed","DejaVu Sans",sans-serif}
.cs-details{width:100%;height:151px;display:flex;padding:1px;border:1px solid #828790}
.cs-details textarea{flex:1;padding:2px 3px;resize:none;overflow:hidden;outline:none;font:11px/13px "DejaVu Sans Condensed","DejaVu Sans",sans-serif}
.cs-v{padding-bottom:53px}
.btn{width:73px;height:21px;background:#e1e1e1;border:1px solid #adadad}
.btn.primary{border:2px solid #0078d7}
.btn:disabled{background:#ccc;border-color:#bfbfbf;color:#838383}
.tab-page .transform-btn{width:121px;margin-top:62px}
.dlg-actions{display:flex;justify-content:flex-end;gap:9px;padding-top:9px}

.markup{position:absolute;left:0;top:0;width:900px;height:400px;pointer-events:none}
```
